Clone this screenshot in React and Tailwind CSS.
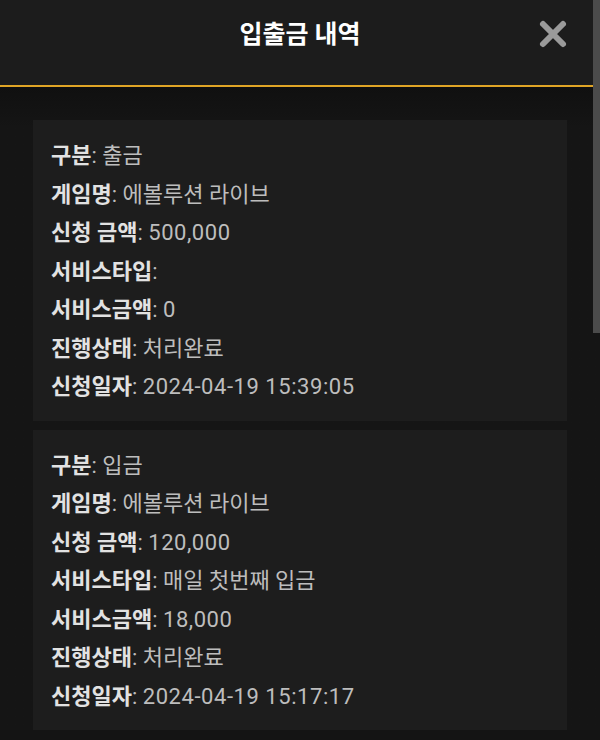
import React from "react";

const records = [
  {
    type: "출금",
    game: "에볼루션 라이브",
    amount: "500,000",
    serviceType: "",
    serviceAmount: "0",
    status: "처리완료",
    date: "2024-04-19 15:39:05",
  },
  {
    type: "입금",
    game: "에볼루션 라이브",
    amount: "120,000",
    serviceType: "매일 첫번째 입금",
    serviceAmount: "18,000",
    status: "처리완료",
    date: "2024-04-19 15:17:17",
  },
];

const Row = ({ label, value }) => {
  const numeric = /^[\d,:\- ]+$/.test(value);
  return (
    <div className="leading-[38.5px] whitespace-nowrap">
      <span className="font-bold text-[#e2e2e2]">{label}</span>
      <span className="text-[#bdbdbd]">: </span>
      <span className={numeric ? "text-[#bdbdbd] tracking-[0.55px]" : "text-[#bdbdbd]"}>
        {value}
      </span>
    </div>
  );
};

export default function App() {
  return (
    <div
      className="relative w-[600px] h-[740px] overflow-hidden bg-[#141414] text-[22px]"
      style={{ fontFamily: "Roboto, 'Noto Sans CJK KR', sans-serif" }}
    >
      {/* Header */}
      <div className="relative h-[85px] bg-[#1c1c1c] flex justify-center pt-[20px]">
        <h1 className="text-[25px] leading-[30px] font-bold text-white">입출금 내역</h1>
        <button className="absolute right-[32px] top-[19px] w-[30px] h-[30px] flex items-center justify-center">
          <svg width="30" height="30" viewBox="0 0 30 30">
            <path
              d="M5 5 L25 25 M25 5 L5 25"
              stroke="#9a9a9a"
              strokeWidth="6"
              strokeLinecap="round"
            />
          </svg>
        </button>
      </div>
      <div className="h-[2px] bg-[#e0a526]" />

      {/* List */}
      <div className="px-[33px] pt-[33px] flex flex-col gap-[9px] bg-gradient-to-b from-[#101010] to-[#151515] to-[40px]">
        {records.map((r, i) => (
          <div key={i} className="bg-[#1d1d1d] px-[18px] pt-[17px] pb-[14px]">
            <Row label="구분" value={r.type} />
            <Row label="게임명" value={r.game} />
            <Row label="신청 금액" value={r.amount} />
            <Row label="서비스타입" value={r.serviceType} />
            <Row label="서비스금액" value={r.serviceAmount} />
            <Row label="진행상태" value={r.status} />
            <Row label="신청일자" value={r.date} />
          </div>
        ))}
      </div>

      {/* Scrollbar */}
      <div className="absolute right-0 top-0 w-[7px] h-[333px] bg-[#4b4b4b]" />
    </div>
  );
}
